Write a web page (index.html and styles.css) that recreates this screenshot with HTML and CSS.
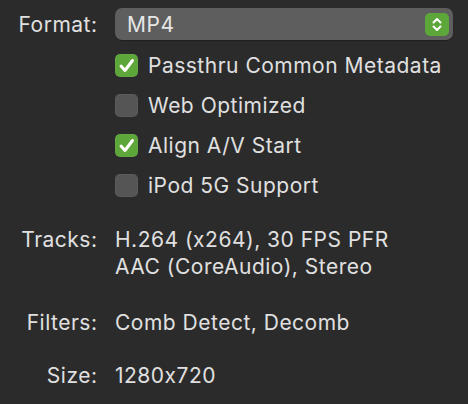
FILE: index.html
```html
<!DOCTYPE html>
<html>
<head>
<meta charset="utf-8">
<link rel="stylesheet" href="styles.css">
</head>
<body>
<div class="form">
  <div class="label row-format">Format:</div>
  <div class="value row-format">
    <div class="popup">
      <span class="popup-text">MP4</span>
      <span class="stepper">
        <svg width="24" height="23" viewBox="0 0 24 23">
          <path d="M8.5 9.5 L12 6 L15.5 9.5" fill="none" stroke="#fff" stroke-width="2" stroke-linecap="round" stroke-linejoin="round"/>
          <path d="M8.5 13.5 L12 17 L15.5 13.5" fill="none" stroke="#fff" stroke-width="2" stroke-linecap="round" stroke-linejoin="round"/>
        </svg>
      </span>
    </div>
  </div>

  <div class="label"></div>
  <div class="value checks">
    <div class="check">
      <span class="box on"><svg width="23" height="23" viewBox="0 0 23 23"><path d="M6 12 L10 16.5 L17.5 6.5" fill="none" stroke="#fff" stroke-width="3" stroke-linecap="round" stroke-linejoin="round"/></svg></span>
      <span>Passthru Common Metadata</span>
    </div>
    <div class="check">
      <span class="box"></span>
      <span>Web Optimized</span>
    </div>
    <div class="check">
      <span class="box on"><svg width="23" height="23" viewBox="0 0 23 23"><path d="M6 12 L10 16.5 L17.5 6.5" fill="none" stroke="#fff" stroke-width="3" stroke-linecap="round" stroke-linejoin="round"/></svg></span>
      <span>Align A/V Start</span>
    </div>
    <div class="check">
      <span class="box"></span>
      <span>iPod 5G Support</span>
    </div>
  </div>

  <div class="label row-tracks">Tracks:</div>
  <div class="value row-tracks">H.264 (x264), 30 FPS PFR<br>AAC (CoreAudio), Stereo</div>

  <div class="label row-filters">Filters:</div>
  <div class="value row-filters">Comb Detect, Decomb</div>

  <div class="label row-size">Size:</div>
  <div class="value row-size">1280x720</div>
</div>
</body>
</html>
```

FILE: styles.css
```css
html, body {
  margin: 0;
  padding: 0;
  background: #2b2b2b;
}
body {
  font-family: Inter, "Noto Sans", sans-serif;
  font-size: 21px;
  letter-spacing: 0.5px;
  font-feature-settings: "calt" 0;
  color: #e0e0e0;
  width: 468px;
  height: 404px;
  overflow: hidden;
}
.form {
  display: grid;
  grid-template-columns: 97px 1fr;
  column-gap: 18px;
  padding: 8px 15px 0 0;
  line-height: 27px;
}
.label {
  text-align: right;
  margin-right: -0.5px;
}
.row-format {
  align-self: center;
}
.popup {
  height: 32px;
  box-sizing: border-box;
  background: #5e5e5e;
  border-radius: 7px;
  display: flex;
  align-items: center;
  justify-content: space-between;
  padding: 0 4px 0 12px;
  box-shadow: 0 1px 1px rgba(0,0,0,0.25);
}
.popup-text {
  color: #e6e6e6;
}
.stepper {
  width: 24px;
  height: 23px;
  background: #5da63a;
  border-radius: 5px;
  display: flex;
}
.checks {
  display: flex;
  flex-direction: column;
  gap: 17px;
  margin-top: 14px;
}
.check {
  display: flex;
  align-items: center;
  gap: 10px;
  height: 23px;
  line-height: 23px;
}
.box {
  width: 23px;
  height: 23px;
  border-radius: 5px;
  background: #555555;
  flex: none;
  display: flex;
  box-shadow: inset 0 0 0 1px rgba(255,255,255,0.04);
}
.box.on {
  background: #5da63a;
}
.row-tracks {
  margin-top: 29px;
}
.row-filters {
  margin-top: 29px;
}
.row-size {
  margin-top: 26px;
}
```
